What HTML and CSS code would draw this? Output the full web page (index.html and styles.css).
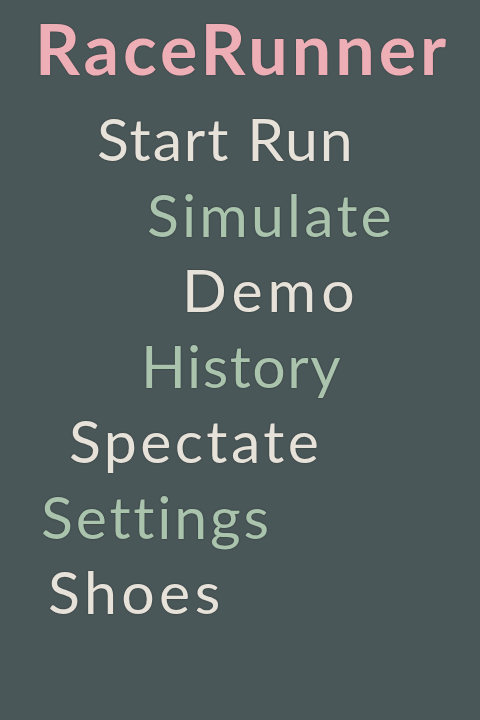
FILE: index.html
```html
<!DOCTYPE html>
<html lang="en">
<head>
<meta charset="utf-8">
<title>RaceRunner</title>
<link rel="stylesheet" href="styles.css">
</head>
<body>
<main class="screen">
  <h1 class="title">RaceRunner</h1>
  <nav class="menu">
    <a class="item cream i-start">Start Run</a>
    <a class="item green i-sim">Simulate</a>
    <a class="item cream i-demo">Demo</a>
    <a class="item green i-hist">History</a>
    <a class="item cream i-spec">Spectate</a>
    <a class="item green i-set">Settings</a>
    <a class="item cream i-shoes">Shoes</a>
  </nav>
</main>
</body>
</html>
```
FILE: styles.css
```css
html, body {
  margin: 0;
  padding: 0;
  background: #4a5758;
}
.screen {
  width: 480px;
  height: 720px;
  box-sizing: border-box;
  font-family: Lato, "Noto Sans", sans-serif;
  display: flex;
  flex-direction: column;
}
.title {
  margin: 0;
  padding-left: 35px;
  font-size: 70px;
  font-weight: 700;
  letter-spacing: 4px;
  line-height: 96px;
  color: #eeaeb6;
  text-shadow: 0 0 2px rgba(0,0,0,0.35);
}
.menu {
  display: flex;
  flex-direction: column;
  margin-top: 5px;
}
.item {
  display: block;
  font-size: 59px;
  line-height: 75.5px;
  letter-spacing: 2.8px;
  text-shadow: 0 0 2px rgba(0,0,0,0.45);
}
.cream { color: #e6e2d9; }
.green { color: #a9c3ad; }
.i-start { margin-left: 97px; letter-spacing: 1.9px; }
.i-sim { margin-left: 147px; letter-spacing: 3.2px; }
.i-demo { margin-left: 182px; letter-spacing: 5px; }
.i-hist { margin-left: 141px; letter-spacing: 1.5px; }
.i-spec { margin-left: 69px; letter-spacing: 3.4px; }
.i-set { margin-left: 41px; }
.i-shoes { margin-left: 48px; letter-spacing: 4.4px; }
```
